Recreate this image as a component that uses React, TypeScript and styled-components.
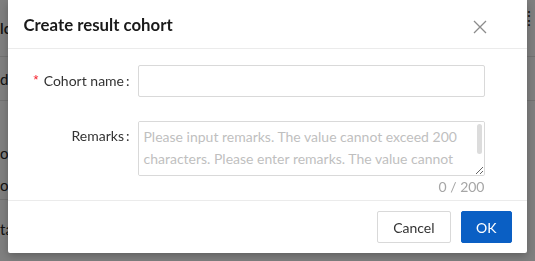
import React from "react";
import styled, { createGlobalStyle } from "styled-components";

const Global = createGlobalStyle`
  html, body { margin: 0; padding: 0; width: 535px; height: 261px; overflow: hidden; }
  body { font-family: "Segoe UI", Lato, "Liberation Sans", sans-serif; background: #fff; }
  * { box-sizing: border-box; }
`;

const Page = styled.div`
  width: 535px;
  height: 261px;
  display: flex;
  justify-content: space-between;
  font-size: 15px;
  color: #262626;
`;

const SideColumn = styled.div`
  width: 8px;
  overflow: hidden;
  display: flex;
  flex-direction: column;
`;

const BgRow = styled.div<{ $h: number; $line?: boolean; $bold?: boolean }>`
  height: ${(p) => p.$h}px;
  flex: none;
  display: flex;
  align-items: center;
  border-bottom: ${(p) => (p.$line ? "1px solid #e3e3e3" : "none")};
  font-weight: ${(p) => (p.$bold ? 600 : 400)};
  white-space: nowrap;
`;

const Mask = styled.div`
  position: fixed;
  inset: 0;
  background: rgba(0, 0, 0, 0.5);
`;

const ModalWrap = styled.div`
  position: fixed;
  inset: 0;
  display: flex;
  justify-content: center;
  align-items: flex-start;
`;

const Modal = styled.div`
  width: 519px;
  margin-left: -1px;
  background: #fff;
  border-radius: 0 0 2px 2px;
  box-shadow: 0 3px 8px rgba(0, 0, 0, 0.25);
  display: flex;
  flex-direction: column;
`;

const Header = styled.div`
  height: 49px;
  display: flex;
  align-items: center;
  justify-content: space-between;
  padding: 0 40px 0 16px;
  border-bottom: 1px solid #ebebeb;
`;

const Title = styled.div`
  font-size: 16.8px;
  font-weight: 700;
  color: #1a1a1a;
  margin-top: 1px;
`;

const Close = styled.button`
  width: 14px;
  height: 14px;
  padding: 0;
  border: none;
  background: none;
  color: #8c8c8c;
  display: flex;
  margin-top: 6px;
`;

const Body = styled.div`
  padding: 16px 42px 0 16px;
  display: flex;
  flex-direction: column;
`;

const FormRow = styled.div<{ $mb: number }>`
  display: grid;
  grid-template-columns: 114px 1fr;
  margin-bottom: ${(p) => p.$mb}px;
`;

const Label = styled.label<{ $top: number }>`
  display: flex;
  justify-content: flex-end;
  align-items: flex-start;
  padding-right: 8px;
  padding-top: ${(p) => p.$top}px;
  font-size: 14px;
  color: #333;
  line-height: 20px;
`;

const Req = styled.span`
  color: #f5222d;
  margin-right: 4px;
  font-family: SimSun, "Liberation Mono", monospace;
  font-size: 13px;
`;

const Colon = styled.span`
  margin-left: 2px;
`;

const Input = styled.input`
  height: 32px;
  width: 100%;
  border: 1px solid #d9d9d9;
  border-radius: 2px;
  outline: none;
  padding: 4px 11px;
  font: inherit;
`;

const Field = styled.div`
  display: flex;
  flex-direction: column;
`;

const AreaBox = styled.div`
  position: relative;
`;

const TextArea = styled.textarea`
  display: block;
  width: 100%;
  height: 55px;
  border: 1px solid #d9d9d9;
  border-radius: 2px;
  padding: 4px 24px 4px 5px;
  font-family: inherit;
  font-size: 14px;
  line-height: 22px;
  color: #333;
  outline: none;
  resize: vertical;
  &::placeholder { color: #bfbfbf; }
`;

const Thumb = styled.div`
  position: absolute;
  right: 3px;
  top: 3px;
  width: 5px;
  height: 30px;
  border-radius: 3px;
  background: #dcdcdc;
`;

const Count = styled.div`
  text-align: right;
  color: #a6a6a6;
  font-size: 14px;
  line-height: 22px;
`;

const Footer = styled.div`
  margin-top: 2px;
  border-top: 1px solid #ebebeb;
  padding: 10px 15px 10px 16px;
  display: flex;
  justify-content: flex-end;
  gap: 10px;
`;

const Button = styled.button<{ $primary?: boolean }>`
  height: 32px;
  padding: 0 ${(p) => (p.$primary ? 14 : 15.5)}px;
  border-radius: 2px;
  font-family: inherit;
  font-size: 14px;
  border: 1px solid ${(p) => (p.$primary ? "#0a5fc4" : "#d9d9d9")};
  background: ${(p) => (p.$primary ? "#0a5fc4" : "#fff")};
  color: ${(p) => (p.$primary ? "#fff" : "#333")};
`;

export default function App() {
  return (
    <>
      <Global />
      <Page>
        <SideColumn>
          <BgRow $h={57} $line $bold>lc</BgRow>
          <BgRow $h={44} $line>d</BgRow>
          <BgRow $h={34}></BgRow>
          <BgRow $h={36}>op</BgRow>
          <BgRow $h={29} $line>oc</BgRow>
          <BgRow $h={58}>ta</BgRow>
        </SideColumn>
        <SideColumn>
          <BgRow $h={34}>⁞</BgRow>
          <BgRow $h={23} $line></BgRow>
          <BgRow $h={44} $line></BgRow>
        </SideColumn>
      </Page>
      <Mask />
      <ModalWrap>
        <Modal>
          <Header>
            <Title>Create result cohort</Title>
            <Close aria-label="Close">
              <svg width="14" height="14" viewBox="0 0 14 14">
                <path d="M1 1 L13 13 M13 1 L1 13" stroke="currentColor" strokeWidth="1.3" />
              </svg>
            </Close>
          </Header>
          <Body>
            <FormRow $mb={24}>
              <Label $top={6}>
                <Req>*</Req>Cohort name<Colon>:</Colon>
              </Label>
              <Input />
            </FormRow>
            <FormRow $mb={0}>
              <Label $top={5}>
                Remarks<Colon>:</Colon>
              </Label>
              <Field>
                <AreaBox>
                  <TextArea placeholder="Please input remarks. The value cannot exceed 200 characters. Please enter remarks. The value cannot exceed 200 characters." />
                  <Thumb />
                </AreaBox>
                <Count>0 / 200</Count>
              </Field>
            </FormRow>
          </Body>
          <Footer>
            <Button>Cancel</Button>
            <Button $primary>OK</Button>
          </Footer>
        </Modal>
      </ModalWrap>
    </>
  );
}
